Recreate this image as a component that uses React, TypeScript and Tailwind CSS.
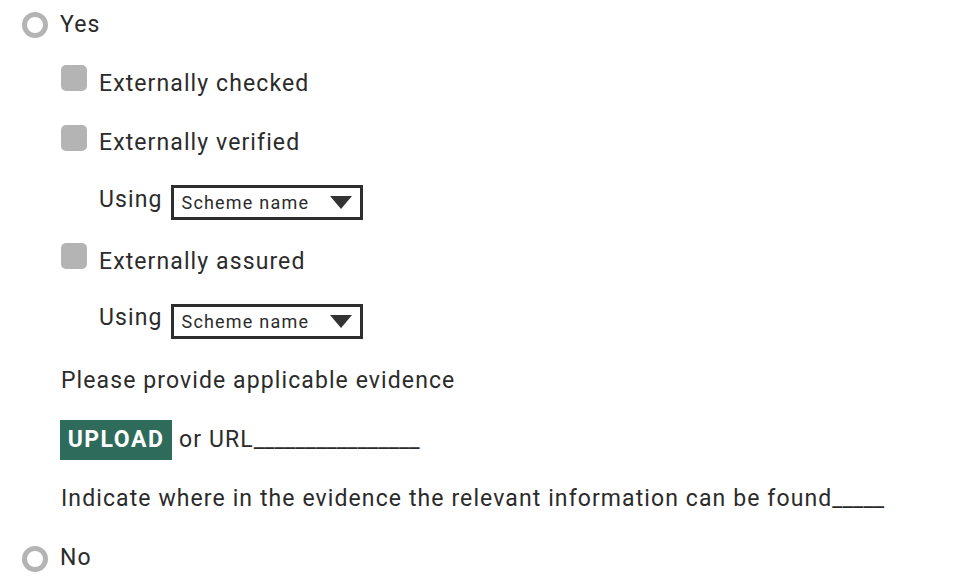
import React from 'react'

function Radio({ label }: { label: string }) {
  return (
    <div className="flex h-9 items-center">
      <span className="ml-[22px] mr-[12px] h-[26px] w-[26px] rounded-full border-[5px] border-[#b4b4b4] bg-white" />
      <span>{label}</span>
    </div>
  )
}

function Check({ label }: { label: string }) {
  return (
    <div className="flex h-9 items-center pl-[61px]">
      <span className="mr-[12px] -mt-[12px] h-[26px] w-[26px] rounded-[5px] bg-[#b4b4b4]" />
      <span>{label}</span>
    </div>
  )
}

function Using() {
  return (
    <div className="flex h-9 items-center pl-[99px]">
      <span className="mr-[8px] -mt-[6px]">Using</span>
      <div className="flex h-[35px] w-[192px] items-center justify-between border-[3px] border-[#2e2e2e] pl-[8px] pr-[8px] text-[18px] tracking-[1.2px]">
        <span>Scheme name</span>
        <svg width="22" height="13" viewBox="0 0 22 13">
          <path d="M0 0H22L11 13Z" fill="#333" />
        </svg>
      </div>
    </div>
  )
}

export default function App() {
  return (
    <div
      className="flex h-[588px] w-[968px] flex-col gap-[23.3px] bg-white pt-[7px] text-[23px] tracking-[1.1px] text-[#2b2b2b]"
      style={{ fontFamily: 'Roboto, "Liberation Sans", sans-serif' }}
    >
      <Radio label="Yes" />
      <Check label="Externally checked" />
      <Check label="Externally verified" />
      <Using />
      <Check label="Externally assured" />
      <Using />
      <div className="flex h-9 items-center pl-[61px]">Please provide applicable evidence</div>
      <div className="flex h-9 items-center pl-[60px]">
        <span className="flex h-[40px] w-[112px] items-center justify-center bg-[#2e6b5b] text-[23px] font-bold tracking-[1.5px] text-white">
          UPLOAD
        </span>
        <span className="ml-[7px]">or URL</span>
        <span className="tracking-normal">________________</span>
      </div>
      <div className="flex h-9 items-center pl-[61px]">
        Indicate where in the evidence the relevant information can be found
        <span className="tracking-normal">_____</span>
      </div>
      <Radio label="No" />
    </div>
  )
}
